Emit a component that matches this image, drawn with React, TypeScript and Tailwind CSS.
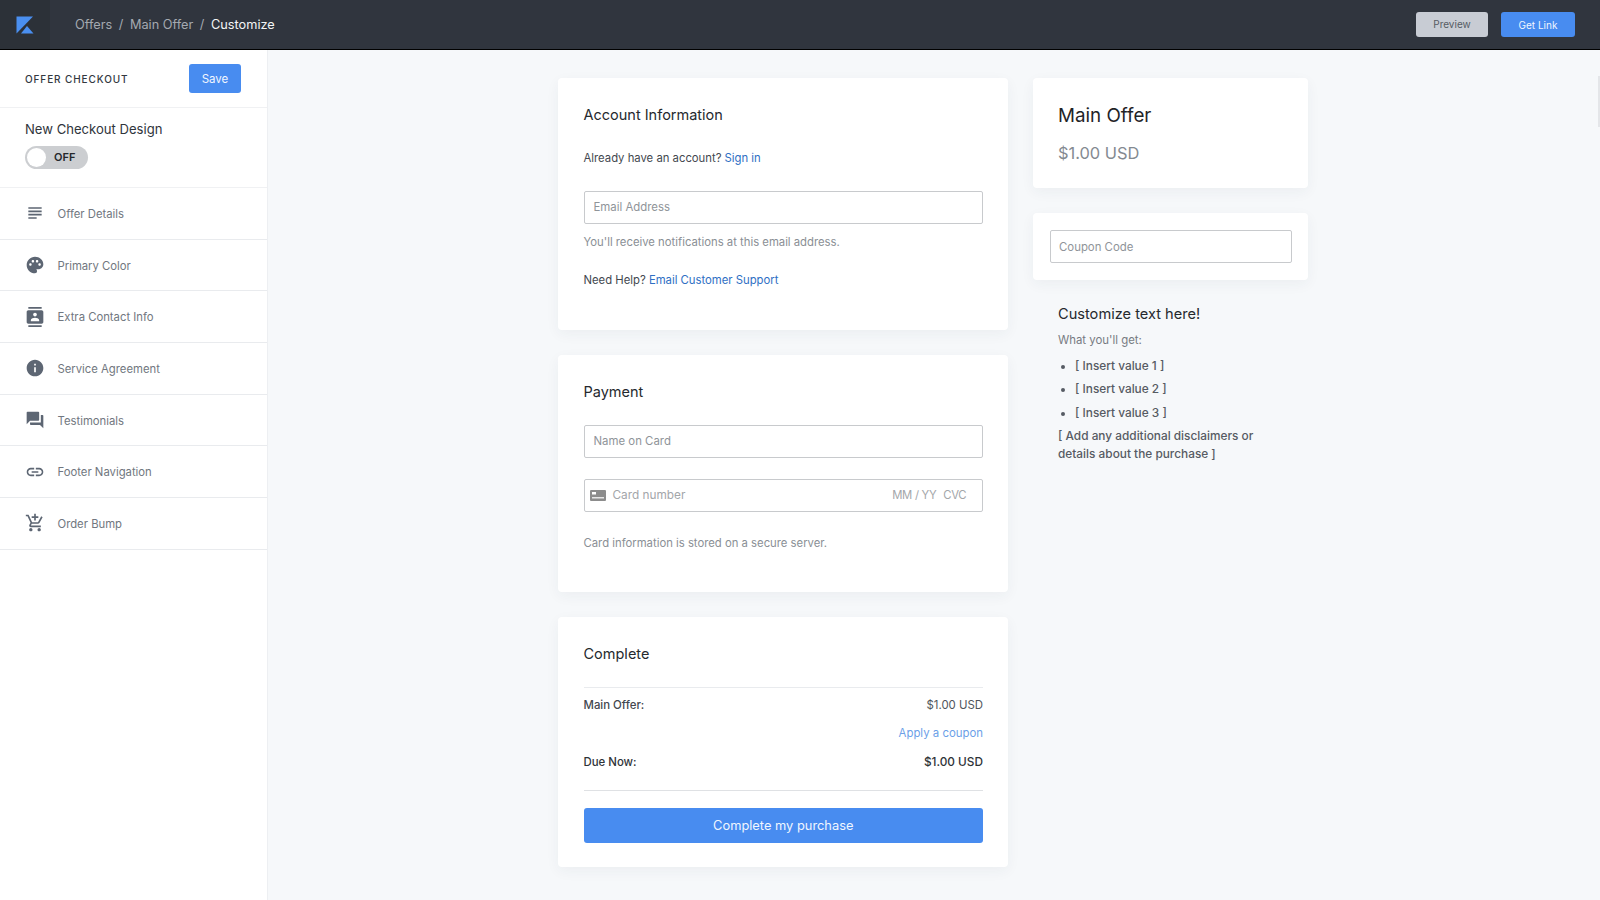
import { MdSubject, MdPalette, MdContacts, MdInfo, MdForum, MdLink, MdAddShoppingCart } from "react-icons/md";

const nav = [
  { label: "Offer Details", Icon: MdSubject },
  { label: "Primary Color", Icon: MdPalette },
  { label: "Extra Contact Info", Icon: MdContacts },
  { label: "Service Agreement", Icon: MdInfo },
  { label: "Testimonials", Icon: MdForum },
  { label: "Footer Navigation", Icon: MdLink },
  { label: "Order Bump", Icon: MdAddShoppingCart },
];

function Field({ placeholder, pad }: { placeholder: string; pad: string }) {
  return (
    <div className={`flex h-[33px] items-center rounded-[2px] border border-[#c8cacd] bg-white pt-[1px] text-[11.4px] text-[#8f9499] ${pad}`}>
      {placeholder}
    </div>
  );
}

function Card({ className, children }: { className: string; children: React.ReactNode }) {
  return <section className={`rounded-[4px] bg-white shadow-[0_4px_14px_rgba(30,50,80,0.05)] ${className}`}>{children}</section>;
}

export default function App() {
  return (
    <div className="flex h-[900px] w-[1600px] flex-col overflow-hidden bg-[#f6f8fa] font-['Inter',sans-serif]">
      <header className="flex h-[50px] shrink-0 items-center border-b border-black bg-[#30353e]">
        <div className="flex h-full w-[50px] items-center justify-center bg-[#2c3138]">
          <svg width="18" height="18" viewBox="0 0 18 18" aria-hidden="true">
            <path d="M0.5 0.5H17L0.5 17.5V0.5Z" fill="#4a8ff0" />
            <path d="M5 17.5L11 10L17.5 17.5H5Z" fill="#4a8ff0" />
          </svg>
        </div>
        <nav className="ml-[25px] flex items-center pt-[1px] text-[12.75px] text-[#a4a9b0]">
          <span>Offers</span>
          <span className="mx-[6.5px]">/</span>
          <span>Main Offer</span>
          <span className="mx-[6.5px]">/</span>
          <span className="text-[#f4f5f6]">Customize</span>
        </nav>
        <div className="ml-auto flex items-center gap-[13px] pr-[25px] text-[10px]">
          <button className="h-[25px] w-[72px] rounded-[3px] bg-[#c8ccd4] text-[#565b63]">Preview</button>
          <button className="h-[25px] w-[74px] rounded-[3px] bg-[#488cf0] pt-[1px] text-[#f0f6ff]">Get Link</button>
        </div>
      </header>

      <div className="relative flex min-h-0 flex-1">
        <aside className="w-[268px] shrink-0 border-r border-[#edeff2] bg-white">
          <div className="flex h-[58px] items-center justify-between border-b border-[#f0f1f3] pl-[25px] pr-[26px]">
            <span className="pt-[1px] text-[10px] font-medium tracking-[0.9px] text-[#33383f]">OFFER CHECKOUT</span>
            <button className="h-[29px] w-[52px] rounded-[3px] bg-[#488cf0] pt-[2px] text-[11.5px] text-[#f0f6ff]">Save</button>
          </div>
          <div className="h-[80px] border-b border-[#f0f1f3] pl-[25px] pt-[12px]">
            <div className="text-[13.1px] leading-[18px] text-[#30353c]">New Checkout Design</div>
            <div className="mt-[8px] flex h-[23px] w-[63px] items-center rounded-full bg-[#ccced1] pl-[2px]">
              <span className="h-[19px] w-[19px] rounded-full bg-white" />
              <span className="ml-[8px] text-[11px] font-semibold text-[#25282c]">OFF</span>
            </div>
          </div>
          {nav.map(({ label, Icon }) => (
            <div key={label} className="flex h-[51.7px] items-center border-b border-[#e9ebee] pl-[25px] text-[11.3px] text-[#717780]">
              <Icon className="h-[20px] w-[20px] text-[#5d6673]" />
              <span className="ml-[12.5px] pt-[2px]">{label}</span>
            </div>
          ))}
        </aside>

        <main className="flex flex-1 justify-center gap-[25px] pr-[2px] pt-[28px]">
          <div className="flex w-[450px] flex-col gap-[25px]">
            <Card className="h-[252px] py-[25px] pl-[25.5px] pr-[25px]">
              <h2 className="mt-[2px] text-[14.5px] leading-[20px] text-[#25292e]">Account Information</h2>
              <p className="mt-[25px] text-[11.3px] leading-[16px] text-[#43484f]">
                Already have an account? <a className="text-[#2f6fc4]">Sign in</a>
              </p>
              <div className="mt-[25px]"><Field placeholder="Email Address" pad="px-[9px]" /></div>
              <p className="mt-[10px] text-[11.3px] leading-[16px] text-[#8a8f95]">You'll receive notifications at this email address.</p>
              <p className="mt-[22px] text-[11.3px] leading-[16px] text-[#43484f]">
                Need Help? <a className="text-[#2f6fc4]">Email Customer Support</a>
              </p>
            </Card>
            <Card className="h-[237px] py-[25px] pl-[25.5px] pr-[25px]">
              <h2 className="mt-[2px] text-[14.5px] leading-[20px] text-[#25292e]">Payment</h2>
              <div className="mt-[23px]"><Field placeholder="Name on Card" pad="px-[9px]" /></div>
              <div className="mt-[21px] flex h-[33px] items-center rounded-[2px] border border-[#c8cacd] pl-[5px] pr-[16px] text-[11.8px] text-[#a3a6aa]">
                <svg width="16" height="11" viewBox="0 0 16 11" aria-hidden="true">
                  <rect width="16" height="11" rx="1" fill="#8c8c8c" />
                  <rect x="2" y="2" width="4" height="2.5" fill="#fff" />
                  <rect x="2" y="7" width="12" height="1.5" fill="#e6e6e6" />
                </svg>
                <span className="ml-[7px]">Card number</span>
                <span className="ml-auto text-[11.3px] tracking-[-0.3px]">MM / YY</span>
                <span className="ml-[7px] text-[11.3px] tracking-[-0.4px]">CVC</span>
              </div>
              <p className="mt-[23px] text-[11.3px] leading-[16px] text-[#8a8f95]">Card information is stored on a secure server.</p>
            </Card>
            <Card className="h-[250px] py-[25px] pl-[25.5px] pr-[25px]">
              <h2 className="mt-[2px] text-[14.5px] leading-[20px] text-[#25292e]">Complete</h2>
              <div className="mt-[23px] border-t border-[#e9ebee] pt-[9px] text-[11.4px] leading-[16px]">
                <div className="flex justify-between text-[#50555c]">
                  <span className="font-medium text-[#43484f]">Main Offer:</span>
                  <span>$1.00 USD</span>
                </div>
                <div className="mt-[12px] text-right text-[#6c9fe8]">Apply a coupon</div>
                <div className="mt-[12.5px] flex justify-between font-medium text-[#2f3338]">
                  <span>Due Now:</span>
                  <span className="text-[11.8px]">$1.00 USD</span>
                </div>
              </div>
              <div className="mt-[20px] border-t border-[#dfe1e4] pt-[17px]">
                <button className="h-[35px] w-full rounded-[3px] bg-[#488cf0] pt-[1px] text-[12.85px] text-[#f0f6ff]">Complete my purchase</button>
              </div>
            </Card>
          </div>

          <div className="flex w-[275px] flex-col">
            <Card className="h-[110px] px-[25px] pt-[25px]">
              <h1 className="text-[18.8px] leading-[26px] text-[#1f2327]">Main Offer</h1>
              <p className="mt-[14px] text-[16.4px] leading-[20px] text-[#848a91]">$1.00 USD</p>
            </Card>
            <Card className="mt-[25px] h-[67px] pl-[17px] pr-[16px] pt-[17px]">
              <Field placeholder="Coupon Code" pad="px-[8px] pt-[2px]" />
            </Card>
            <div className="px-[25px] pt-[24px] text-[#565b63]">
              <h3 className="text-[14.6px] leading-[20px] text-[#25292e]">Customize text here!</h3>
              <p className="mt-[8px] text-[11.4px] leading-[17px] text-[#767b82]">What you'll get:</p>
              <ul className="mt-[8.5px] list-disc pl-[17px] text-[11.85px] font-medium leading-[17px]">
                <li className="mb-[6.5px]">[ Insert value 1 ]</li>
                <li className="mb-[6.5px]">[ Insert value 2 ]</li>
                <li className="mb-[6.5px]">[ Insert value 3 ]</li>
              </ul>
              <p className="text-[11.85px] font-medium leading-[17.5px]">[ Add any additional disclaimers or details about the purchase ]</p>
            </div>
          </div>
        </main>
        <span className="absolute right-0 top-[26px] h-[51px] w-[2px] bg-[#e4e6e9]" />
      </div>
    </div>
  );
}
